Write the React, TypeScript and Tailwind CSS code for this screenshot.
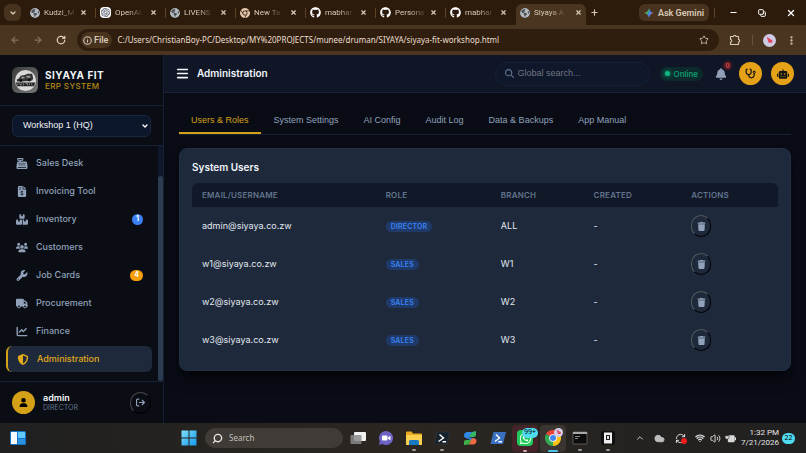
import React from 'react';
import {
  FaArrowRightFromBracket,
  FaBars,
  FaBell,
  FaBoxesStacked,
  FaCashRegister,
  FaChartLine,
  FaChrome,
  FaEarthAmericas,
  FaFileInvoiceDollar,
  FaGithub,
  FaMagnifyingGlass,
  FaRobot,
  FaShieldHalved,
  FaStethoscope,
  FaTrash,
  FaTruck,
  FaUser,
  FaUsers,
  FaWhatsapp,
  FaWrench,
} from 'react-icons/fa6';
import { SiOpenai } from 'react-icons/si';
import {
  ArrowLeft,
  ArrowRight,
  ChevronDown,
  ChevronUp,
  Cloud,
  Copy,
  EllipsisVertical,
  Info,
  Minus,
  Plus,
  RefreshCw,
  RotateCw,
  Search,
  Star,
  Volume2,
  Wifi,
  X,
} from 'lucide-react';

const browserTabs = [
  { title: 'Kudzi_M', icon: 'globe' },
  { title: 'OpenAI', icon: 'openai' },
  { title: 'LIVENS', icon: 'globe' },
  { title: 'New Ta', icon: 'chrome' },
  { title: 'mabhar', icon: 'github' },
  { title: 'Persona', icon: 'github' },
  { title: 'mabhar', icon: 'github' },
  { title: 'Siyaya A', icon: 'globe', active: true },
];

const navItems = [
  { label: 'Sales Desk', Icon: FaCashRegister },
  { label: 'Invoicing Tool', Icon: FaFileInvoiceDollar },
  { label: 'Inventory', Icon: FaBoxesStacked, badge: '1', badgeClass: 'w-[11px] bg-[#3b82f6]' },
  { label: 'Customers', Icon: FaUsers },
  { label: 'Job Cards', Icon: FaWrench, badge: '4', badgeClass: 'w-[13px] bg-[#f59e0b]' },
  { label: 'Procurement', Icon: FaTruck },
  { label: 'Finance', Icon: FaChartLine },
  { label: 'Administration', Icon: FaShieldHalved, active: true },
];

const adminTabs = ['Users & Roles', 'System Settings', 'AI Config', 'Audit Log', 'Data & Backups', 'App Manual'];

const users = [
  { email: 'admin@siyaya.co.zw', role: 'DIRECTOR', branch: 'ALL' },
  { email: 'w1@siyaya.co.zw', role: 'SALES', branch: 'W1' },
  { email: 'w2@siyaya.co.zw', role: 'SALES', branch: 'W2' },
  { email: 'w3@siyaya.co.zw', role: 'SALES', branch: 'W3' },
];

const Favicon: React.FC<{ name: string }> = ({ name }) => {
  if (name === 'openai') {
    return (
      <span className="flex size-[11px] shrink-0 items-center justify-center rounded-sm bg-white">
        <SiOpenai className="size-[9px] text-gray-700" />
      </span>
    );
  }
  if (name === 'chrome') return <FaChrome className="size-[10px] shrink-0 text-[#e8c9ae]" />;
  if (name === 'github') return <FaGithub className="size-[11px] shrink-0 text-white" />;
  return <FaEarthAmericas className="size-[10px] shrink-0 rounded-full bg-[#4b5056] text-[#b4babf]" />;
};

const BrowserChrome: React.FC = () => {
  return (
    <div className="shrink-0 bg-[#2c1b0b] font-['Roboto',sans-serif] text-[#d8c8b6]">
      <div className="flex h-[25px] items-center pl-1">
        <button aria-label="Search tabs" className="mr-[5px] flex size-[17px] shrink-0 items-center justify-center rounded-md bg-[#48331f]">
          <ChevronDown className="size-2" strokeWidth={4} />
        </button>
        {browserTabs.map((tab, i) => (
          <div
            key={i}
            className={`flex w-[70px] shrink-0 items-center gap-1 self-stretch pl-1 ${
              tab.active ? 'mt-1 rounded-t-md bg-[#4a3520] pb-1 pr-1' : ''
            }`}
          >
            <Favicon name={tab.icon} />
            <span className="whitespace-nowrap text-[8px] leading-3 [mask-image:linear-gradient(90deg,#000_50%,transparent_110%)]">
              {tab.title}
            </span>
            <button aria-label="Close tab" className="ml-auto">
              <X className="size-[7px]" strokeWidth={4} />
            </button>
            {!tab.active && <span className={`ml-1 h-[10px] w-px ${i === 6 ? 'bg-transparent' : 'bg-[#5a4228]'}`} />}
          </div>
        ))}
        <button aria-label="New tab" className="ml-1">
          <Plus className="size-[9px]" strokeWidth={3} />
        </button>
        <button className="ml-auto flex h-[17px] items-center gap-1 rounded-md bg-[#48331f] px-[5px] text-[9px] font-semibold leading-3">
          <svg viewBox="0 0 16 16" className="size-[10px]">
            <defs>
              <linearGradient id="gemini" x1="0" y1="0.3" x2="1" y2="0.7">
                <stop offset="0" stopColor="#f6c02c" />
                <stop offset="0.35" stopColor="#45a56b" />
                <stop offset="0.55" stopColor="#4285f4" />
                <stop offset="1" stopColor="#ea5b57" />
              </linearGradient>
            </defs>
            <path d="M8 0c.9 4.600 3.400 7.100 8 8-4.600.9-7.100 3.400-8 8-.9-4.600-3.400-7.100-8-8 4.600-.9 7.100-3.400 8-8z" fill="url(#gemini)" />
          </svg>
          Ask Gemini
        </button>
        <span className="ml-[5px] h-[10px] w-px bg-[#5a4228]" />
        <div className="ml-1 flex w-[87px] justify-around text-white">
          <button aria-label="Minimize">
            <Minus className="size-[9px]" strokeWidth={3} />
          </button>
          <button aria-label="Restore">
            <Copy className="size-2 -scale-x-100 rotate-90" strokeWidth={3} />
          </button>
          <button aria-label="Close">
            <X className="size-[10px]" strokeWidth={3} />
          </button>
        </div>
      </div>

      <div className="flex h-[30px] items-center bg-[#4a3520] pl-[10px] pr-[9px]">
        <div className="flex w-[67px] shrink-0 items-center gap-[13px] text-[#8a7157]">
          <button aria-label="Back">
            <ArrowLeft className="size-[10px]" strokeWidth={3} />
          </button>
          <button aria-label="Forward">
            <ArrowRight className="size-[10px]" strokeWidth={3} />
          </button>
          <button aria-label="Reload" className="text-[#e0cdb8]">
            <RotateCw className="size-[10px]" strokeWidth={3} />
          </button>
        </div>
        <div className="flex h-[22px] min-w-0 flex-1 items-center rounded-full bg-[#2f1e0e] pl-1 pr-[10px]">
          <span className="flex h-4 items-center gap-[2px] rounded-full bg-[#48331f] pl-[2px] pr-1 text-[9px] font-semibold leading-3">
            <Info className="size-[9px]" strokeWidth={3} />
            File
          </span>
          <input
            aria-label="Address"
            defaultValue="C:/Users/ChristianBoy-PC/Desktop/MY%20PROJECTS/munee/druman/SIYAYA/siyaya-fit-workshop.html"
            className="ml-[5px] min-w-0 flex-1 bg-transparent font-['Noto_Sans',sans-serif] text-[8px] leading-4 text-[#ecdfd1] outline-none"
          />
          <Star className="size-[10px]" strokeWidth={2} />
        </div>
        <div className="flex w-[78px] shrink-0 items-center">
          <svg viewBox="0 0 24 24" className="ml-[10px] size-[12px]" fill="none" stroke="currentColor" strokeWidth="2.200" strokeLinejoin="round">
            <path d="M3 5h6a2.500 2.500 0 0 1 5 0h5v6a2.500 2.500 0 0 1 0 5v5H3v-5a2.500 2.500 0 0 0 0-5z" />
          </svg>
          <span className="ml-[11px] h-[10px] w-px bg-[#6b5135]" />
          <span className="ml-[10px] flex size-[13px] items-center justify-center rounded-full bg-[#cfcbe6]">
            <svg viewBox="0 0 12 12" className="size-2">
              <path d="M1 1l9 6-1 3H4z" fill="#e0455c" />
            </svg>
          </span>
          <EllipsisVertical className="ml-auto size-[11px]" strokeWidth={3} />
        </div>
      </div>
    </div>
  );
};

const Sidebar: React.FC = () => {
  return (
    <aside className="flex w-[164px] shrink-0 flex-col border-r border-[#162033] bg-[#0a0d14]">
      <div className="flex h-[51px] shrink-0 items-center gap-[7px] border-b border-[#162033] pl-3">
        <span className="flex size-[26px] items-center justify-center rounded-md bg-gradient-to-br from-[#3c3c3c] to-[#777777]">
          <svg viewBox="0 0 24 24" className="size-[23px]">
            <circle cx="12" cy="12" r="11" fill="#d9d9d9" />
            <path d="M3 11l2-1 2-3 5-1 2-1h5l1 5-1 2-4 .5-7 .5H3z" fill="#333" />
            <path d="M8 8h3v2H7zM13 7h4v2h-4z" fill="#999" />
            <circle cx="7" cy="12" r="1.500" fill="#111" />
            <circle cx="16" cy="11.500" r="1.500" fill="#111" />
            <path d="M2 14h20l-1 4H3z" fill="#222" />
            <path d="M4 15v2M6 15l1 2 1-2M10 15v2M12 15h2v2M16 15v2M18 15l1 2" stroke="#bbb" strokeWidth="0.700" fill="none" />
          </svg>
        </span>
        <div>
          <div className="text-[10px] font-bold leading-3 tracking-wider text-slate-100">SIYAYA FIT</div>
          <div className="text-[8px] font-medium leading-[10px] tracking-wider text-[#b98a12]">ERP SYSTEM</div>
        </div>
      </div>

      <div className="flex h-[40px] shrink-0 items-center border-b border-[#162033] px-3">
        <div className="relative flex flex-1 items-center">
          <select
            aria-label="Workshop"
            className="h-[22px] w-full appearance-none rounded-md border border-[#1b2740] bg-[#0d172b] pl-[10px] font-['Liberation_Sans',Arial,sans-serif] text-[9px] text-slate-100"
          >
            <option>Workshop 1 (HQ)</option>
          </select>
          <ChevronDown className="pointer-events-none absolute right-[2px] size-2 text-white" strokeWidth={4} />
        </div>
      </div>

      <div className="flex min-h-0 flex-1">
        <nav className="flex min-w-0 flex-1 flex-col gap-[2px] overflow-hidden px-[6px] pt-1">
          {navItems.map(({ label, Icon, badge, badgeClass, active }) => (
            <a
              key={label}
              href="#"
              className={`flex h-[26px] shrink-0 items-center gap-2 rounded-md pr-[9px] text-[9px] font-medium ${
                active ? 'border-l-2 border-[#d4a017] bg-[#1e293b] pl-[9px] text-[#e0aa1c]' : 'pl-[10px] text-slate-400'
              }`}
            >
              <Icon className="w-3 shrink-0 text-[11px]" />
              {label}
              {badge && (
                <span className={`ml-auto flex h-[11px] items-center justify-center rounded-full text-[7px] font-bold text-white ${badgeClass}`}>
                  {badge}
                </span>
              )}
            </a>
          ))}
        </nav>
        <div className="w-[5px] bg-[#0f172a] pt-[30px]">
          <div className="h-full rounded-full bg-[#2d3b51]" />
        </div>
      </div>

      <div className="flex h-[42px] shrink-0 items-center gap-2 border-t border-[#162033] px-3">
        <span className="flex size-[23px] items-center justify-center rounded-full bg-[#d4a017]">
          <FaUser className="size-[9px] text-black" />
        </span>
        <div>
          <div className="text-[9px] font-semibold leading-[10px] text-slate-100">admin</div>
          <div className="text-[7px] leading-[9px] text-slate-500">DIRECTOR</div>
        </div>
        <button
          aria-label="Log out"
          className="ml-auto flex h-[22px] w-[21px] items-center justify-center rounded-full border border-b-black border-l-[#4b4b4b] border-r-black border-t-[#4b4b4b] text-slate-400"
        >
          <FaArrowRightFromBracket className="size-[9px]" />
        </button>
      </div>
    </aside>
  );
};

const TopBar: React.FC = () => {
  return (
    <header className="flex h-[38px] shrink-0 items-center border-b border-[#1a2436] bg-[#101625] px-3">
      <button aria-label="Toggle menu" className="text-slate-100">
        <FaBars className="size-[13px]" />
      </button>
      <h1 className="ml-2 text-[10px] font-semibold text-slate-100">Administration</h1>
      <label className="ml-auto flex h-6 w-[155px] items-center gap-1 rounded-full border border-[#162136] bg-[#0f172a] pl-[9px]">
        <FaMagnifyingGlass className="size-[9px] shrink-0 text-slate-500" />
        <input
          aria-label="Global search"
          placeholder="Global search..."
          className="min-w-0 flex-1 bg-transparent font-['Liberation_Sans',Arial,sans-serif] text-[9px] outline-none placeholder:text-[#6f7682]"
        />
      </label>
      <span className="ml-[10px] flex h-[14px] items-center gap-1 rounded-full bg-[#0c2a2b] px-[5px] text-[8px] font-medium text-[#10a674]">
        <span className="size-[5px] rounded-full bg-[#10b981] shadow-[0_0_4px_#10b981]" />
        Online
      </span>
      <button aria-label="Notifications" className="relative ml-3 text-slate-400">
        <FaBell className="size-3" />
        <span className="absolute -right-[5px] -top-[7px] flex size-[9px] items-center justify-center rounded-full bg-[#4a1a26] text-[6px] font-bold text-[#e04a4a]">
          0
        </span>
      </button>
      <button aria-label="Diagnostics" className="ml-3 flex size-[23px] items-center justify-center rounded-full bg-[#e5a117] text-[#141414]">
        <FaStethoscope className="size-[11px]" />
      </button>
      <button aria-label="Assistant" className="ml-[9px] flex size-[23px] items-center justify-center rounded-full bg-[#e5a117] text-[#141414]">
        <FaRobot className="size-3" />
      </button>
    </header>
  );
};

const UsersCard: React.FC = () => {
  return (
    <section className="mt-[13px] rounded-lg border border-[#222f44] bg-[#1e293b] px-3 pb-[11px] pt-[11px] shadow-lg shadow-black/50">
      <h2 className="text-[10px] font-semibold leading-[14px] text-slate-100">System Users</h2>
      <table className="mt-[9px] w-full table-fixed text-left">
        <thead className="h-6 bg-[#111827] text-[8px] text-slate-500">
          <tr>
            <th className="w-[31%] rounded-tl-md pl-[10px] font-semibold tracking-wide">EMAIL/USERNAME</th>
            <th className="w-[20%] pl-3 font-semibold tracking-wide">ROLE</th>
            <th className="w-[16%] pl-[10px] font-semibold tracking-wide">BRANCH</th>
            <th className="w-[17%] pl-[9px] font-semibold tracking-wide">CREATED</th>
            <th className="w-[16%] rounded-tr-md pl-[7px] font-semibold tracking-wide">ACTIONS</th>
          </tr>
        </thead>
        <tbody className="text-[9px] text-slate-200">
          {users.map((user) => (
            <tr key={user.email} className="h-[38px]">
              <td className="pl-[10px]">{user.email}</td>
              <td className="pl-3">
                <span className="inline-flex h-[11px] items-center rounded-full bg-[#1f3a68] px-[5px] align-middle text-[7px] font-semibold tracking-wide text-[#3b82f6]">
                  {user.role}
                </span>
              </td>
              <td className="pl-[10px]">{user.branch}</td>
              <td className="pl-[9px]">-</td>
              <td className="pl-[7px]">
                <button
                  aria-label={`Delete ${user.email}`}
                  className="flex h-[22px] w-5 items-center justify-center rounded-full border border-b-black border-l-[#55585c] border-r-black border-t-[#55585c] text-slate-400"
                >
                  <FaTrash className="size-[9px]" />
                </button>
              </td>
            </tr>
          ))}
        </tbody>
      </table>
    </section>
  );
};

const TaskIcon: React.FC<{ children: React.ReactNode }> = ({ children }) => {
  return (
    <span className="relative flex h-full items-center justify-center">
      <svg viewBox="0 0 16 16" className="size-4">
        {children}
      </svg>
      <span className="absolute bottom-[2px] h-[2px] w-1 rounded-full bg-[#9a9a9a]" />
    </span>
  );
};

const Taskbar: React.FC = () => {
  return (
    <footer className="flex h-[30px] shrink-0 items-center bg-gradient-to-r from-[#202020] via-[#2b2620] to-[#202020] font-['Noto_Sans',sans-serif] text-[#e6e6e6]">
      <div className="flex flex-1 items-center">
        <button aria-label="Widgets" className="ml-[10px]">
          <svg viewBox="0 0 16 14" className="h-[14px] w-4">
            <rect width="16" height="14" rx="1.500" fill="#1573c4" />
            <rect x="1" y="1" width="6" height="12" fill="#f5f9fd" />
            <rect x="8" y="1" width="7" height="6" fill="#62c9fa" />
            <rect x="8" y="8" width="7" height="5" fill="#2a91e0" />
          </svg>
        </button>
      </div>

      <button aria-label="Start">
        <svg viewBox="0 0 16 16" className="size-4">
          <defs>
            <linearGradient id="win" x1="0" y1="0" x2="1" y2="1">
              <stop offset="0" stopColor="#7fe0fd" />
              <stop offset="1" stopColor="#1497e8" />
            </linearGradient>
          </defs>
          <path d="M0.500 0.500h7v7h-7zM8.500 0.500h7v7h-7zM0.500 8.500h7v7h-7zM8.500 8.500h7v7h-7z" fill="url(#win)" />
        </svg>
      </button>
      <label className="ml-2 flex h-5 w-[138px] items-center gap-[6px] rounded-full bg-[#403b36] pl-[7px]">
        <Search className="size-[11px] -scale-x-100" strokeWidth={3} />
        <input aria-label="Search" placeholder="Search" className="min-w-0 flex-1 bg-transparent text-[8px] outline-none placeholder:text-[#c4c0bc]" />
      </label>

      <div className="ml-[7px] flex h-full items-center gap-3">
        <svg viewBox="0 0 16 16" className="size-4">
          <rect x="4" y="2" width="12" height="9" rx="1" fill="#f1f1f1" />
          <rect x="0.500" y="5" width="11" height="9" rx="1" fill="#8b8b8b" fillOpacity="0.850" />
        </svg>
        <svg viewBox="0 0 16 16" className="size-4">
          <path d="M8 1a7 7 0 1 1-3.500 13L1 15l.8-3.700A7 7 0 0 1 8 1z" fill="#6d63c4" />
          <rect x="4" y="5.500" width="5.500" height="5" rx="1" fill="#fff" />
          <path d="M10 7.500l2.500-1.700v4.600L10 8.700z" fill="#fff" />
        </svg>
        <TaskIcon>
          <path d="M0 2.500A1 1 0 0 1 1 1.500h4.500l1.500 2h8a1 1 0 0 1 1 1V14a1 1 0 0 1-1 1H1a1 1 0 0 1-1-1z" fill="#e9a920" />
          <path d="M0 5h16v9a1 1 0 0 1-1 1H1a1 1 0 0 1-1-1z" fill="#fbd04f" />
          <path d="M3 15v-3.500a1.500 1.500 0 0 1 1.500-1.500h7a1.500 1.500 0 0 1 1.500 1.500V15z" fill="#1878c0" />
        </TaskIcon>
        <TaskIcon>
          <path d="M3 2h12.500L13 14H.5z" fill="#17212c" stroke="#34424f" strokeWidth="0.500" />
          <path d="M5.500 4.500L9.500 8l-5 3.500M8.500 11.700h3.500" stroke="#fff" strokeWidth="1.400" fill="none" />
        </TaskIcon>
        <svg viewBox="0 0 16 16" className="size-4">
          <path d="M2 5.500C2 3.500 3.500 2 5.500 2H10L6.500 8.500 4 8C2.700 7.700 2 6.700 2 5.500z" fill="#2e8ae6" />
          <path d="M7 7l3-5 4-1v3.500C14 6 13 7 11.500 7z" fill="#35b76a" />
          <path d="M4 8l3-1 5 1.500-2 2.500z" fill="#2d7bd0" />
          <path d="M9 9.500L11.500 8c2 .3 3 1.700 3 3.200S13 14.500 11 14.500H7z" fill="#ef6a45" />
          <path d="M2 15v-3c0-1.500 1-2 2.500-2H9l-2 4.500z" fill="#3fae49" />
        </svg>
        <svg viewBox="0 0 16 16" className="size-4">
          <path d="M3.500 2H16l-3 12H.5z" fill="#3970bf" />
          <path d="M6 4.500L9.500 8 5 11.500M8.500 11.700H12" stroke="#fff" strokeWidth="1.400" fill="none" />
        </svg>
      </div>

      <div className="ml-[6px] flex h-full items-center gap-[2px]">
        <div className="relative flex h-[27px] w-[26px] items-center justify-center rounded bg-[#45232a]">
          <span className="flex size-4 items-center justify-center rounded-sm bg-[#1fc95a]">
            <FaWhatsapp className="size-[13px] text-white" />
          </span>
          <span className="absolute left-[10px] top-[3px] z-10 flex h-[10px] items-center rounded-full bg-[#4fdcf0] px-[2px] text-[7px] text-black">99+</span>
          <span className="absolute bottom-0 h-[2px] w-1 rounded-full bg-[#c9a8a8]" />
        </div>
        <div className="relative flex h-[27px] w-[26px] items-center justify-center rounded bg-[#3a3531]">
          <svg viewBox="0 0 16 16" className="size-4">
            <path d="M8 8L1.070 4A8 8 0 0 1 14.930 4z" fill="#ea4335" />
            <path d="M8 8l6.930-4A8 8 0 0 1 8 16z" fill="#fbc116" />
            <path d="M8 8v8A8 8 0 0 1 1.070 4z" fill="#34a853" />
            <circle cx="8" cy="8" r="3.800" fill="#fff" />
            <circle cx="8" cy="8" r="3" fill="#4285f4" />
          </svg>
          <span className="absolute right-[3px] top-[3px] flex size-[9px] items-center justify-center rounded-full bg-[#d4cfe8]">
            <svg viewBox="0 0 12 12" className="size-[6px]">
              <path d="M1 1l9 6-1 3H4z" fill="#e0455c" />
            </svg>
          </span>
          <span className="absolute bottom-0 h-[2px] w-[10px] rounded-full bg-[#4cc2ea]" />
        </div>
      </div>
      <div className="ml-[6px] mr-[9px] flex h-full items-center gap-3">
        <TaskIcon>
          <rect x="1" y="2" width="14" height="12" rx="0.500" fill="#0c0c0c" stroke="#777" strokeWidth="0.700" />
          <rect x="1" y="2" width="14" height="2" fill="#a9a9a9" />
          <path d="M3 6.500h5M3 8.500h3" stroke="#aaa" strokeWidth="0.800" />
        </TaskIcon>
        <TaskIcon>
          <rect x="1" y="1" width="14" height="14" rx="2" fill="#111" />
          <path d="M4 2.500h8v11H4z" fill="#eee" />
          <path d="M6 5h4v5H6z" fill="#222" />
          <path d="M7 6h2v3H7z" fill="#ddd" />
        </TaskIcon>
      </div>

      <div className="flex flex-1 items-center justify-end">
        <ChevronUp className="size-[10px]" />
        <Cloud className="ml-[9px] size-[11px] fill-[#bdbdbd] text-[#bdbdbd]" />
        <span className="relative ml-[10px]">
          <RefreshCw className="size-[11px]" />
          <span className="absolute -right-px bottom-0 size-[6px] rounded-full bg-[#ee1c1c]" />
        </span>
        <Wifi className="ml-[9px] size-[10px]" strokeWidth={3} />
        <Volume2 className="ml-[5px] size-[11px]" />
        <svg viewBox="0 0 24 24" className="ml-1 size-[11px]">
          <rect x="6" y="5" width="15" height="15" rx="2" fill="#d8d8d8" />
          <rect x="21" y="9" width="3" height="7" rx="1" fill="#d8d8d8" />
          <path d="M2 2v4M7 2v4M0 6h9v3a4 4 0 0 1-9 0zM4.500 13v6" fill="#d8d8d8" stroke="#202020" strokeWidth="1.200" />
        </svg>
        <div className="ml-[5px] whitespace-nowrap text-right font-['Roboto',sans-serif] text-[8px] leading-[10px]">
          <div>1:32 PM</div>
          <div>7/21/2026</div>
        </div>
        <span className="ml-[3px] mr-[11px] flex h-[11px] w-[13px] items-center justify-center rounded-full bg-[#4fdcf0] text-[7px] text-black">22</span>
      </div>
    </footer>
  );
};

const App: React.FC = () => {
  return (
    <div className="flex h-screen flex-col overflow-hidden bg-[#090c15] font-['Inter',sans-serif]">
      <BrowserChrome />
      <div className="flex min-h-0 flex-1">
        <Sidebar />
        <div className="flex min-w-0 flex-1 flex-col">
          <TopBar />
          <main className="flex-1 px-[15px] pt-[14px]">
            <div
              role="tablist"
              className="flex gap-px border-b border-[#172033] font-['Liberation_Sans',Arial,sans-serif] text-[9px] text-slate-400"
            >
              {adminTabs.map((tab, i) => (
                <button
                  key={tab}
                  role="tab"
                  aria-selected={i === 0}
                  className={`h-[27px] border-b-2 px-3 pt-[2px] ${i === 0 ? 'border-[#d4a017] text-[#d4a017]' : 'border-transparent'}`}
                >
                  {tab}
                </button>
              ))}
            </div>
            <UsersCard />
          </main>
        </div>
      </div>
      <Taskbar />
    </div>
  );
};

export default App;
